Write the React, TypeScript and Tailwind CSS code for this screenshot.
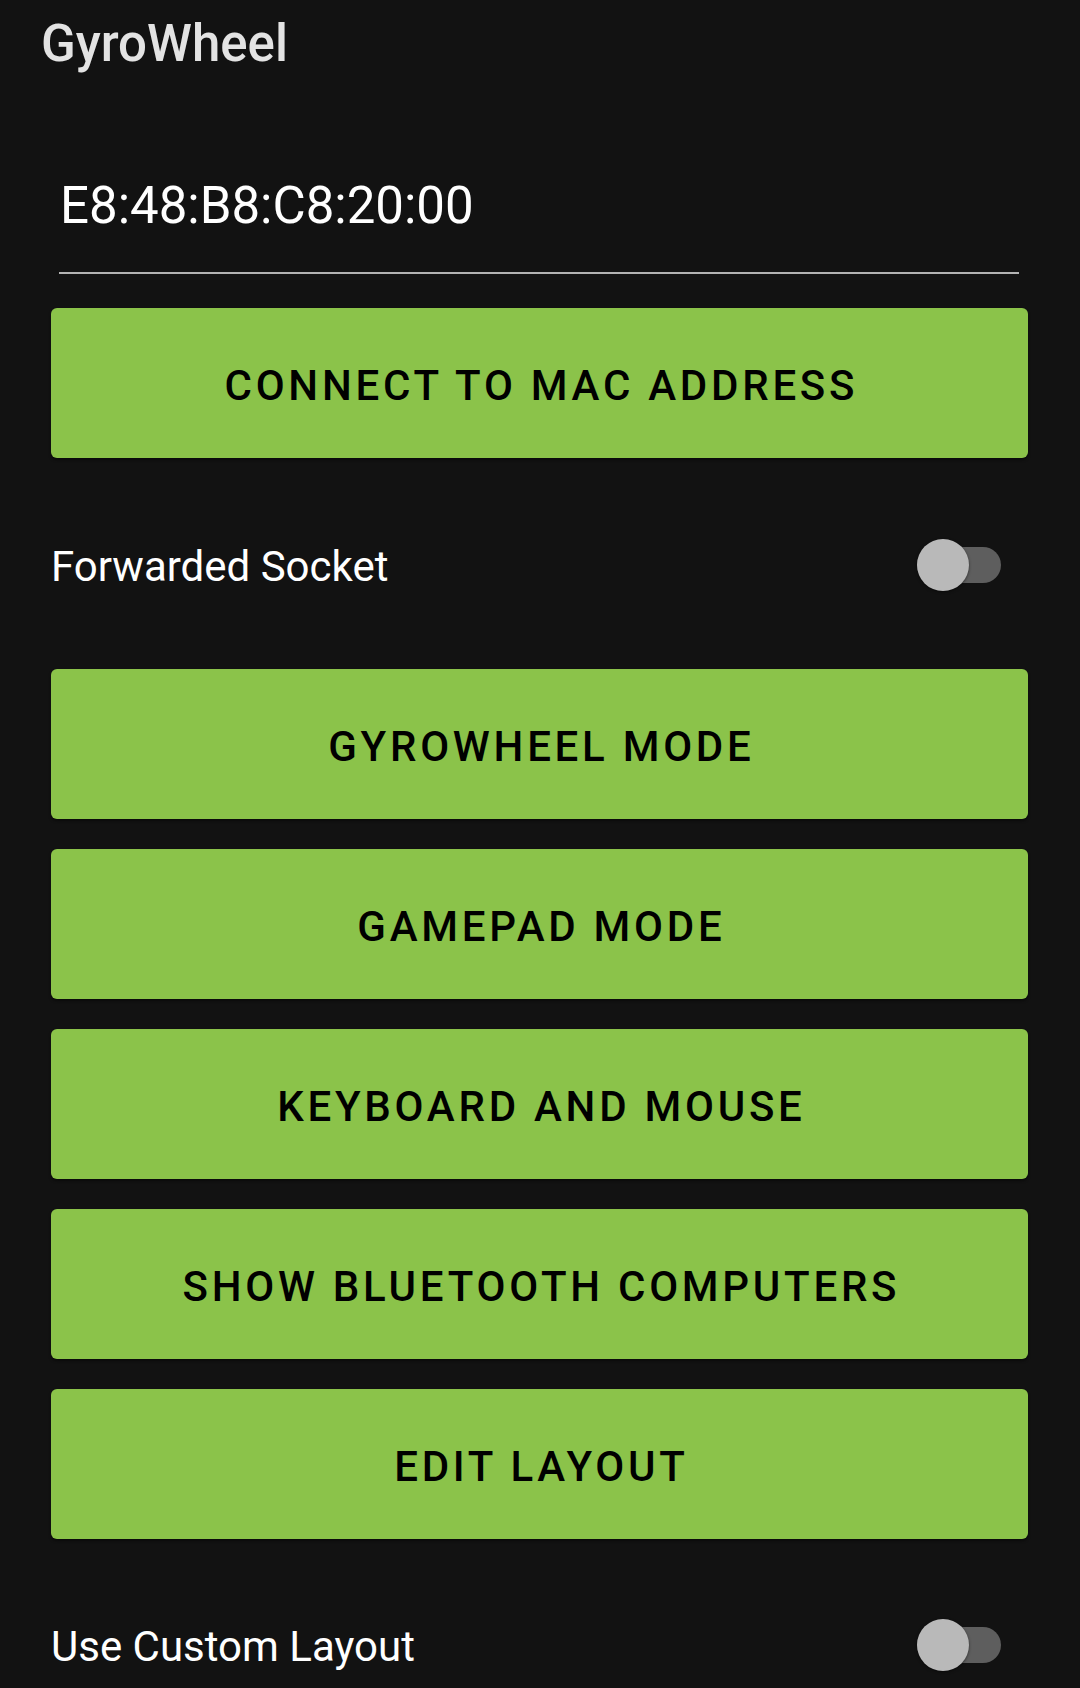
const buttons = [
  "GYROWHEEL MODE",
  "GAMEPAD MODE",
  "KEYBOARD AND MOUSE",
  "SHOW BLUETOOTH COMPUTERS",
  "EDIT LAYOUT",
];

function GreenButton({ label }: { label: string }) {
  return (
    <button className="w-full h-[150px] rounded-[6px] bg-[#8bc34a] shadow-[0_2px_3px_rgba(0,0,0,0.45)] flex items-center justify-center">
      <span className="text-black text-[42px] font-medium tracking-[3.75px] leading-[50px] pl-[3.75px] pt-[6px]">
        {label}
      </span>
    </button>
  );
}

function Toggle() {
  return (
    <div className="relative w-[89px] h-[52px] flex items-center">
      <div className="ml-auto w-[84px] h-[36px] rounded-full bg-[#5e5e5e]" />
      <div className="absolute left-[5px] top-0 w-[52px] h-[52px] rounded-full bg-[#b9b9b9] shadow-[0_1px_3px_rgba(0,0,0,0.5)]" />
    </div>
  );
}

function SwitchRow({ label }: { label: string }) {
  return (
    <div className="h-[52px] flex items-center justify-between pr-[27px]">
      <span className="text-white text-[42px] leading-[50px] mt-[4px]">{label}</span>
      <Toggle />
    </div>
  );
}

export default function App() {
  return (
    <div
      className="w-[1080px] h-[1688px] bg-[#121212] overflow-hidden"
      style={{ fontFamily: "Roboto, 'Liberation Sans', sans-serif" }}
    >
      <div className="pt-[13px] pl-[41px] h-[75px]">
        <h1 className="text-[51px] leading-[62px] font-medium text-[#e3e3e3]">GyroWheel</h1>
      </div>

      <div className="mt-[101px] ml-[59px] w-[960px]">
        <div className="text-white text-[51px] leading-[60px] ml-[1px]">E8:48:B8:C8:20:00</div>
        <div className="mt-[36px] h-[2px] bg-[#b3b3b3]" />
      </div>

      <div className="ml-[51px] w-[977px] mt-[34px]">
        <GreenButton label="CONNECT TO MAC ADDRESS" />

        <div className="mt-[81px] mb-[78px]">
          <SwitchRow label="Forwarded Socket" />
        </div>

        <div className="flex flex-col gap-[30px]">
          {buttons.map((b) => (
            <GreenButton key={b} label={b} />
          ))}
        </div>

        <div className="mt-[80px]">
          <SwitchRow label="Use Custom Layout" />
        </div>
      </div>
    </div>
  );
}
